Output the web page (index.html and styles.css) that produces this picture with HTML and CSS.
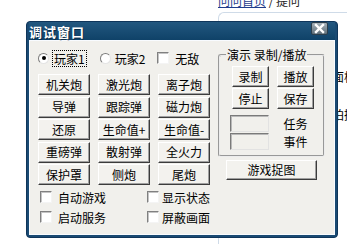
FILE: index.html
```html
<!DOCTYPE html>
<html lang="zh-CN">
<head>
    <meta charset="UTF-8">
    <title>调试窗口</title>
    <link rel="stylesheet" href="styles.css">
</head>
<body>
    <div class="crumbs"><a href="#">问问首页</a> / 提问</div>
    <div class="page-box">
        <p class="page-line line-a">面板</p>
        <p class="page-line line-b">拍摄</p>
    </div>

    <div class="window">
        <div class="titlebar">
            <span class="title">调试窗口</span>
            <span class="close">
                <svg width="17" height="13" viewBox="0 0 17 13">
                    <path d="M5 3 L12 10 M12 3 L5 10" stroke="#fff" stroke-width="2.4" stroke-linecap="square"/>
                </svg>
            </span>
        </div>

        <div class="body">
            <div class="left">
                <div class="player-row">
                    <label class="opt opt-1"><span class="radio checked"></span><span class="focus">玩家1</span></label>
                    <label class="opt opt-2"><span class="radio"></span>玩家2</label>
                    <label class="opt opt-3"><span class="check"></span>无敌</label>
                </div>

                <div class="weapons">
                    <button class="btn">机关炮</button>
                    <button class="btn">激光炮</button>
                    <button class="btn">离子炮</button>
                    <button class="btn">导弹</button>
                    <button class="btn">跟踪弹</button>
                    <button class="btn">磁力炮</button>
                    <button class="btn">还原</button>
                    <button class="btn">生命值+</button>
                    <button class="btn">生命值-</button>
                    <button class="btn">重磅弹</button>
                    <button class="btn">散射弹</button>
                    <button class="btn">全火力</button>
                    <button class="btn">保护罩</button>
                    <button class="btn">侧炮</button>
                    <button class="btn">尾炮</button>
                </div>

                <div class="toggles">
                    <label class="opt toggle"><span class="check"></span>自动游戏</label>
                    <label class="opt toggle toggle-2"><span class="check"></span>显示状态</label>
                    <label class="opt toggle"><span class="check"></span>启动服务</label>
                    <label class="opt toggle toggle-2"><span class="check"></span>屏蔽画面</label>
                </div>
            </div>

            <div class="right">
                <fieldset class="group">
                    <legend>演示 录制/播放</legend>
                    <div class="rec-buttons">
                        <button class="btn">录制</button>
                        <button class="btn">播放</button>
                        <button class="btn">停止</button>
                        <button class="btn">保存</button>
                    </div>
                    <div class="rec-fields">
                        <span class="edit"></span><span class="tag">任务</span>
                        <span class="edit"></span><span class="tag">事件</span>
                    </div>
                </fieldset>
                <button class="btn capture">游戏捉图</button>
            </div>
        </div>
    </div>
</body>
</html>
```

FILE: styles.css
```css
body {
    margin: 0;
    overflow: hidden;
    background: #fff;
    font-family: "Noto Sans CJK SC", "Noto Sans", sans-serif;
    font-size: 12px;
    color: #000;
}

/* page behind the dialog */
.crumbs {
    margin-top: -6px;
    padding-left: 218px;
    height: 14px;
    line-height: 14px;
    color: #222;
    white-space: nowrap;
}
.crumbs a {
    color: #1f3d8c;
    text-decoration: underline;
}
.page-box {
    margin: 4px 0 0 218px;
    height: 231px;
    border: 1px solid #cfdbe8;
    border-right: 0;
    border-bottom: 0;
    border-radius: 6px 0 0 0;
}
.page-line {
    margin: 0;
    padding-left: 113px;
    line-height: 14px;
    white-space: nowrap;
}
.line-a { padding-top: 57px; }
.line-b { padding-top: 24px; }

/* dialog window */
.window {
    position: absolute;
    left: 26px;
    top: 21px;
    width: 312px;
    height: 217px;
    box-sizing: border-box;
    padding: 0 2px 2px;
    background: #1a4a73;
    border: 1px solid #0f355a;
    border-radius: 4px;
}
.titlebar {
    height: 18px;
    display: flex;
    justify-content: space-between;
    align-items: flex-start;
    background: linear-gradient(#22577f, #0f4268);
}
.title {
    color: #fff;
    font-weight: bold;
    font-size: 13px;
    letter-spacing: 1px;
    line-height: 19px;
    text-shadow: 1px 1px 0 #0a2c48;
}
.close {
    display: block;
    width: 17px;
    height: 13px;
    margin-right: 7px;
    box-sizing: border-box;
    border: 1px solid #2c3e4c;
    border-radius: 2px;
    background: linear-gradient(#a4b0b8, #5f6f7a);
}
.close svg {
    display: block;
    margin: -1px 0 0 -1px;
}

.body {
    height: 195px;
    box-sizing: border-box;
    display: flex;
    gap: 8px;
    padding: 7px 9px 0 8px;
    background: #f1f0ec;
    border: 1px solid #f8fbff;
}

.left {
    width: 172px;
}
.right {
    width: 107px;
}

.opt {
    display: flex;
    align-items: center;
    gap: 6px;
    white-space: nowrap;
}

.player-row {
    height: 20px;
    display: flex;
    align-items: center;
    margin-bottom: 6px;
}
.opt-1 { gap: 4px; margin-right: 14px; }
.opt-2 { gap: 4px; margin-right: 12px; }
.focus {
    line-height: 15px;
    padding: 0 1px;
    outline: 1px dotted #000;
}

.radio {
    position: relative;
    width: 11px;
    height: 11px;
    box-sizing: border-box;
    border-radius: 50%;
    border: 1px solid;
    border-color: #7c7c7c #e4e4e4 #e4e4e4 #7c7c7c;
    background: #fff;
}
.radio.checked::after {
    content: "";
    position: absolute;
    left: 2.5px;
    top: 2.5px;
    width: 4px;
    height: 4px;
    border-radius: 50%;
    background: #000;
}
.check {
    width: 12px;
    height: 12px;
    box-sizing: border-box;
    border: 1px solid;
    border-color: #808080 #f4f4f4 #f4f4f4 #808080;
    box-shadow: inset 1px 1px #c4c4c4;
    background: #fff;
}

.btn {
    font: inherit;
    color: #000;
    height: 21px;
    padding: 0;
    background: #f3f2ee;
    border: 1px solid;
    border-color: #fff #3c3c3c #3c3c3c #fff;
    box-shadow: inset -1px -1px #a0a0a0;
    line-height: 18px;
}

.weapons {
    display: grid;
    grid-template-columns: repeat(3, 52px);
    grid-auto-rows: 21px;
    column-gap: 8px;
    row-gap: 1.5px;
}

.toggles {
    display: grid;
    grid-template-columns: 107px auto;
    grid-auto-rows: 20px;
    margin: 2px 0 0 2px;
}
.toggle-2 { gap: 3px; }

.group {
    margin: 0;
    padding: 0 0 5px;
    border: 2px groove #ececec;
    border-radius: 3px;
}
.group legend {
    margin-left: 6px;
    padding: 0 1px;
    line-height: 14px;
}
.rec-buttons {
    display: grid;
    grid-template-columns: 37px 37px;
    grid-auto-rows: 21px;
    column-gap: 8px;
    row-gap: 1px;
    margin: 4px 0 0 12px;
}
.rec-fields {
    display: grid;
    grid-template-columns: 37px 37px;
    grid-auto-rows: 17px;
    column-gap: 8px;
    row-gap: 1px;
    margin: 6px 0 0 12px;
}
.edit {
    margin-left: -2px;
    box-sizing: border-box;
    border: 1px solid;
    border-color: #7a7a7a #e2e2e2 #e2e2e2 #7a7a7a;
    box-shadow: inset 1px 1px #b8b8b8;
    background: #f1f0ec;
}
.tag {
    text-align: center;
    line-height: 17px;
}

.capture {
    display: block;
    width: 91px;
    height: 20px;
    margin: 3px auto 0;
}
```
